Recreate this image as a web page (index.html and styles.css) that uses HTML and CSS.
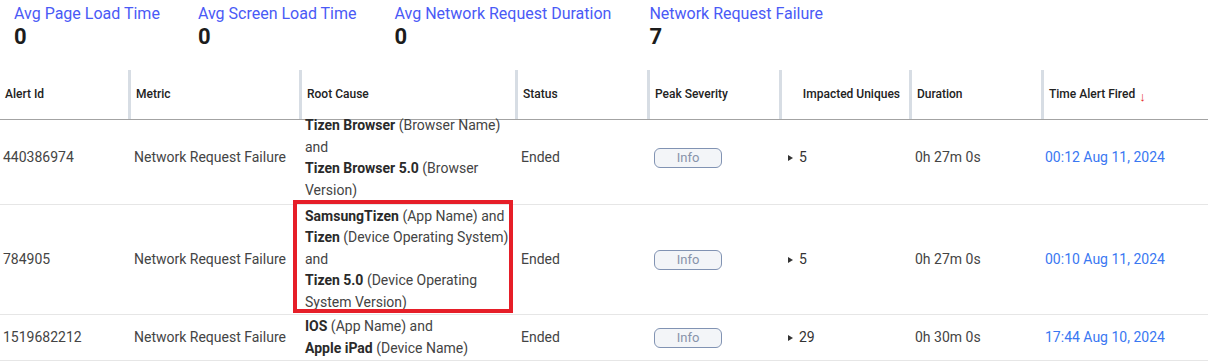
FILE: index.html
```html
<!DOCTYPE html>
<html lang="en">
  <head>
    <meta charset="UTF-8" />
    <meta name="viewport" content="width=device-width, initial-scale=1.0" />
    <title>Alerts</title>
    <link rel="stylesheet" href="styles.css">
  </head>
  <body>
    <main>
      <!--
        Summary metrics
      -->

      <section class="stats">
        <div class="stat">
          <p class="stat-label">Avg Page Load Time</p>
          <p class="stat-value">0</p>
        </div>
        <div class="stat">
          <p class="stat-label">Avg Screen Load Time</p>
          <p class="stat-value">0</p>
        </div>
        <div class="stat">
          <p class="stat-label">Avg Network Request Duration</p>
          <p class="stat-value">0</p>
        </div>
        <div class="stat">
          <p class="stat-label">Network Request Failure</p>
          <p class="stat-value">7</p>
        </div>
      </section>

      <!--
        Alerts table
      -->

      <div class="alerts" role="table">
        <div class="row head" role="row">
          <div class="cell" role="columnheader">Alert Id</div>
          <div class="cell" role="columnheader">Metric</div>
          <div class="cell" role="columnheader">Root Cause</div>
          <div class="cell" role="columnheader">Status</div>
          <div class="cell" role="columnheader">Peak Severity</div>
          <div class="cell num" role="columnheader">Impacted Uniques</div>
          <div class="cell" role="columnheader">Duration</div>
          <div class="cell" role="columnheader">
            Time Alert Fired <span class="sort">↓</span>
          </div>
        </div>

        <div class="row first" role="row">
          <div class="cell">440386974</div>
          <div class="cell">Network Request Failure</div>
          <div class="cell cause">
            <div><b>Tizen Browser</b> (Browser Name) and</div>
            <div><b>Tizen Browser 5.0</b> (Browser Version)</div>
          </div>
          <div class="cell">Ended</div>
          <div class="cell"><span class="badge">Info</span></div>
          <div class="cell uniques"><i class="caret"></i>5</div>
          <div class="cell">0h 27m 0s</div>
          <div class="cell"><a class="time" href="#">00:12 Aug 11, 2024</a></div>
        </div>

        <div class="row second" role="row">
          <div class="cell">784905</div>
          <div class="cell">Network Request Failure</div>
          <div class="cell cause marked">
            <div><b>SamsungTizen</b> (App Name) and</div>
            <div><b>Tizen</b> (Device Operating System) and</div>
            <div><b>Tizen 5.0</b> (Device Operating System Version)</div>
          </div>
          <div class="cell">Ended</div>
          <div class="cell"><span class="badge">Info</span></div>
          <div class="cell uniques"><i class="caret"></i>5</div>
          <div class="cell">0h 27m 0s</div>
          <div class="cell"><a class="time" href="#">00:10 Aug 11, 2024</a></div>
        </div>

        <div class="row third" role="row">
          <div class="cell">1519682212</div>
          <div class="cell">Network Request Failure</div>
          <div class="cell cause">
            <div><b>IOS</b> (App Name) and</div>
            <div><b>Apple iPad</b> (Device Name)</div>
          </div>
          <div class="cell">Ended</div>
          <div class="cell"><span class="badge">Info</span></div>
          <div class="cell uniques"><i class="caret"></i>29</div>
          <div class="cell">0h 30m 0s</div>
          <div class="cell"><a class="time" href="#">17:44 Aug 10, 2024</a></div>
        </div>
      </div>
    </main>
  </body>
</html>
```

FILE: styles.css
```css
/*
  Global styles
*/

:root {
  --indigo: #4a5af6;
  --link: #3a78f2;
  --text: #444;
  --strong: #2a2a2a;
  --rule: #e6e6e6;
  --divider: #d7dde4;
  --red: #e61e28;
}
* {
  margin: 0;
  padding: 0;
  box-sizing: border-box;
  font-family: Roboto, "Liberation Sans", sans-serif;
}
body {
  background-color: white;
  overflow: hidden;
}

/*
  [1] Summary metrics
*/

.stats {
  display: flex;
  gap: 38px;
  padding: 4px 0 0 14px;
  margin-bottom: 20px;
}
.stat-label {
  font-size: 16px;
  line-height: 20px;
  color: var(--indigo);
}
.stat-value {
  font-size: 22px;
  line-height: 26px;
  font-weight: 700;
  color: #1c1c1c;
}

/*
  [2] Alerts table
*/

.row {
  display: grid;
  grid-template-columns: 128px 171px 216px 132px 132px 130px 132px 167px;
  grid-template-rows: minmax(0, 1fr);
  border-bottom: 1px solid var(--rule);
}
.row .cell {
  display: flex;
  align-items: center;
  min-height: 0;
  font-size: 14px;
  line-height: 21.5px;
  color: var(--text);
  padding: 0 6px;
}
.row .cell:first-child {
  padding-left: 3px;
}
.row .cell b {
  font-weight: 700;
  color: var(--strong);
}

.head {
  height: 50px;
  border-bottom-color: #a3a3a3;
}
.head .cell {
  font-size: 12px;
  font-weight: 500;
  color: #222;
  padding-left: 5px;
  border-left: 3px solid var(--divider);
}
.head .cell:first-child {
  padding-left: 5px;
  border-left: none;
}
.head .num {
  justify-content: flex-end;
  padding-right: 9px;
}
.head .sort {
  color: var(--red);
  font-size: 13px;
  margin: 4px 0 0 4px;
}

.row .cause {
  flex-direction: column;
  justify-content: center;
  align-items: flex-start;
  padding: 0 2px 0 6px;
}

.first {
  height: 85px;
}
.first .cell {
  padding-bottom: 8px;
}
.second {
  height: 110px;
}
.third {
  height: 46px;
}

.marked {
  position: relative;
}
.marked::after {
  content: "";
  position: absolute;
  left: -6px;
  top: -5px;
  width: 220px;
  height: 113px;
  box-sizing: border-box;
  border: 4px solid var(--red);
  pointer-events: none;
}

.badge {
  display: inline-flex;
  align-items: center;
  justify-content: center;
  width: 68px;
  height: 20px;
  margin-left: 1px;
  border: 1px solid #8193b3;
  border-radius: 6px;
  background-color: #f3f5f8;
  font-size: 13px;
  color: #8893aa;
}

.row .uniques {
  padding-left: 9px;
  color: #333;
}
.caret {
  width: 0;
  height: 0;
  margin-right: 6px;
  border-top: 3px solid transparent;
  border-bottom: 3px solid transparent;
  border-left: 5px solid #333;
}

.time {
  color: var(--link);
  text-decoration: none;
  margin-left: -2px;
}
```
